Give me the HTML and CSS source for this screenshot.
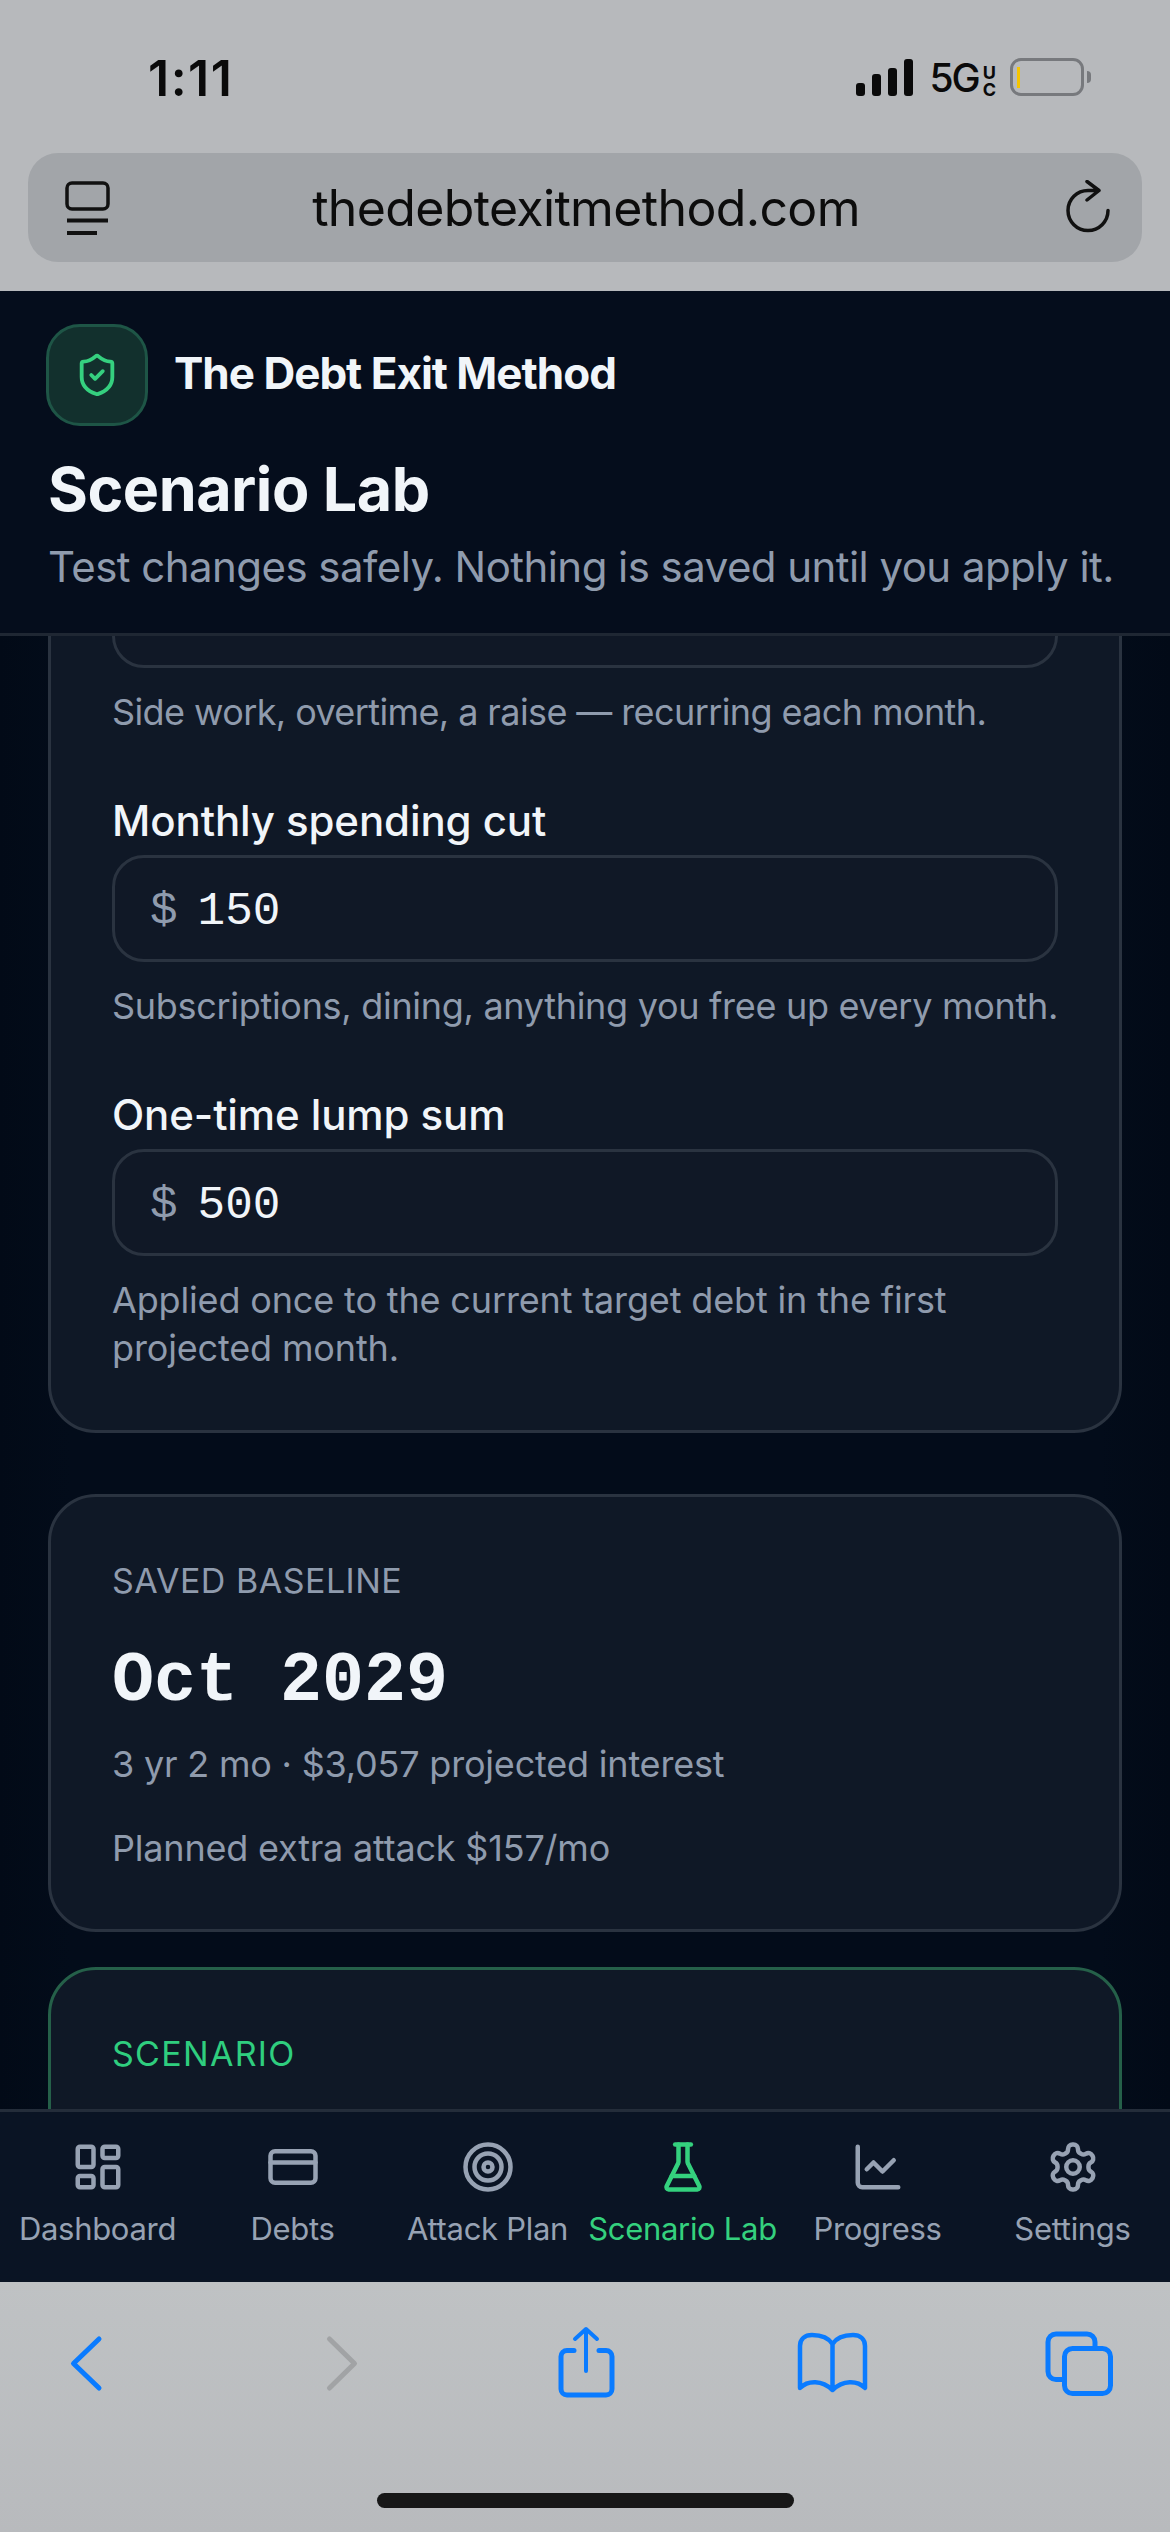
FILE: index.html
```html
<!DOCTYPE html>
<html lang="en">

<head>
    <meta charset="UTF-8">
    <meta name="viewport" content="width=device-width, initial-scale=1.0">
    <title>Scenario Lab</title>
    <link rel="stylesheet" href="styles.css">
</head>

<body>
    <div class="phone">

        <!-- Safari top -->
        <div class="browserTop">
            <div class="statusBar">
                <span class="time">1:11</span>
                <div class="statusRight">
                    <div class="signal"><i class="b1"></i><i class="b2"></i><i class="b3"></i><i class="b4"></i></div>
                    <span class="net">5G</span>
                    <span class="netSmall"><b>U</b><b>C</b></span>
                    <div class="battery"><i class="batteryLevel"></i></div>
                    <i class="batteryNub"></i>
                </div>
            </div>
            <div class="urlBar">
                <svg class="urlIcon" viewBox="0 0 46 56" fill="none" stroke="#111" stroke-width="3.5" stroke-linecap="round" stroke-linejoin="round">
                    <rect x="3" y="3" width="41" height="26" rx="5" />
                    <path d="M3 40.5H44M3 53H33" stroke-width="4" stroke-linecap="butt" />
                </svg>
                <span class="urlText">thedebtexitmethod.com</span>
                <svg class="urlIcon" viewBox="0 0 46 56" fill="none" stroke="#111" stroke-width="3.5" stroke-linecap="round" stroke-linejoin="round">
                    <path d="M33 10.5H22A20 20 0 1 0 42 30.5M21 1.5 33 10.5 21 20" />
                </svg>
            </div>
        </div>

        <!-- App header -->
        <header class="appHeader">
            <div class="brand">
                <div class="logo">
                    <svg class="logoIcon" viewBox="0 0 24 24" fill="none" stroke="#35d07f" stroke-width="2" stroke-linecap="round" stroke-linejoin="round">
                        <path d="M20 13c0 5-3.5 7.5-7.66 8.95a1 1 0 0 1-.67-.01C7.5 20.5 4 18 4 13V6a1 1 0 0 1 1-1c2 0 4.5-1.2 6.24-2.72a1.17 1.17 0 0 1 1.52 0C14.51 3.81 17 5 19 5a1 1 0 0 1 1 1z" />
                        <path d="m9 12 2 2 4-4" />
                    </svg>
                </div>
                <span class="brandName">The Debt Exit Method</span>
            </div>
            <h1>Scenario Lab</h1>
            <p class="subtitle">Test changes safely. Nothing is saved until you apply it.</p>
        </header>

        <!-- Scrolling content -->
        <main class="content">
            <div class="scrolled">
                <section class="card formCard">
                    <div class="inputBox"></div>
                    <p class="help helpTight">Side work, overtime, a raise — recurring each month.</p>

                    <div class="field">
                        <div class="fieldLabel">Monthly spending cut</div>
                        <div class="inputBox"><span class="dollar">$</span><span class="amount">150</span></div>
                        <p class="help">Subscriptions, dining, anything you free up every month.</p>
                    </div>

                    <div class="field">
                        <div class="fieldLabel">One-time lump sum</div>
                        <div class="inputBox"><span class="dollar">$</span><span class="amount">500</span></div>
                        <p class="help helpWide">Applied once to the current target debt in the first<br>projected month.</p>
                    </div>
                </section>

                <section class="card baseCard">
                    <div class="eyebrow">SAVED BASELINE</div>
                    <div class="bigDate">Oct 2029</div>
                    <p class="stat">3 yr 2 mo · $3,057 projected interest</p>
                    <p class="stat statLast">Planned extra attack $157/mo</p>
                </section>

                <section class="card scenarioCard">
                    <div class="eyebrow green">SCENARIO</div>
                </section>
            </div>
        </main>

        <!-- Tabs -->
        <nav class="tabBar">
            <div class="tab">
                <svg class="tabIcon" viewBox="0 0 24 24">
                    <rect x="3" y="3" width="7" height="9" rx="1" />
                    <rect x="14" y="3" width="7" height="5" rx="1" />
                    <rect x="14" y="12" width="7" height="9" rx="1" />
                    <rect x="3" y="16" width="7" height="5" rx="1" />
                </svg>
                <span>Dashboard</span>
            </div>
            <div class="tab">
                <svg class="tabIcon" viewBox="0 0 24 24">
                    <rect x="2" y="5" width="20" height="14" rx="2" />
                    <path d="M2 10h20" />
                </svg>
                <span>Debts</span>
            </div>
            <div class="tab">
                <svg class="tabIcon" viewBox="0 0 24 24">
                    <circle cx="12" cy="12" r="10" />
                    <circle cx="12" cy="12" r="6" />
                    <circle cx="12" cy="12" r="2" />
                </svg>
                <span>Attack Plan</span>
            </div>
            <div class="tab active">
                <svg class="tabIcon" viewBox="0 0 24 24">
                    <path d="M10 2v7.527a2 2 0 0 1-.211.896L4.72 20.55a1 1 0 0 0 .9 1.45h12.76a1 1 0 0 0 .9-1.45l-5.069-10.127A2 2 0 0 1 14 9.527V2" />
                    <path d="M8.5 2h7" />
                    <path d="M7 16h10" />
                </svg>
                <span>Scenario Lab</span>
            </div>
            <div class="tab">
                <svg class="tabIcon" viewBox="0 0 24 24">
                    <path d="M3 3v16a2 2 0 0 0 2 2h16" />
                    <path d="m7 13 3-3 4 4 5-5" />
                </svg>
                <span>Progress</span>
            </div>
            <div class="tab">
                <svg class="tabIcon" viewBox="0 0 24 24">
                    <path d="M12.22 2h-.44a2 2 0 0 0-2 2v.18a2 2 0 0 1-1 1.73l-.43.25a2 2 0 0 1-2 0l-.15-.08a2 2 0 0 0-2.73.73l-.22.38a2 2 0 0 0 .73 2.73l.15.1a2 2 0 0 1 1 1.72v.51a2 2 0 0 1-1 1.74l-.15.09a2 2 0 0 0-.73 2.73l.22.38a2 2 0 0 0 2.73.73l.15-.08a2 2 0 0 1 2 0l.43.25a2 2 0 0 1 1 1.73V20a2 2 0 0 0 2 2h.44a2 2 0 0 0 2-2v-.18a2 2 0 0 1 1-1.73l.43-.25a2 2 0 0 1 2 0l.15.08a2 2 0 0 0 2.73-.73l.22-.39a2 2 0 0 0-.73-2.73l-.15-.08a2 2 0 0 1-1-1.74v-.5a2 2 0 0 1 1-1.74l.15-.09a2 2 0 0 0 .73-2.73l-.22-.38a2 2 0 0 0-2.73-.73l-.15.08a2 2 0 0 1-2 0l-.43-.25a2 2 0 0 1-1-1.73V4a2 2 0 0 0-2-2z" />
                    <circle cx="12" cy="12" r="3" />
                </svg>
                <span>Settings</span>
            </div>
        </nav>

        <!-- Safari bottom -->
        <div class="browserBottom">
            <div class="toolbar">
                <svg class="toolIcon" viewBox="0 0 80 80" stroke="#0a7bff" stroke-width="5">
                    <path d="M53 17 27.5 41.5 53 66" />
                </svg>
                <svg class="toolIcon" viewBox="0 0 80 80" stroke="#a1a3a5" stroke-width="5">
                    <path d="M34.5 17 59.5 41.5 34.5 66" />
                </svg>
                <svg class="toolIcon" viewBox="0 0 80 80" stroke="#0a7bff" stroke-width="5">
                    <path d="M31 28.5H24a6 6 0 0 0-6 6V67a6 6 0 0 0 6 6H63a6 6 0 0 0 6-6V34.5a6 6 0 0 0-6-6H56" />
                    <path d="M43 8V49M32 17 43 7 54 17" stroke-width="4" />
                </svg>
                <svg class="toolIcon" viewBox="0 0 80 80" stroke="#0a7bff" stroke-width="4.5">
                    <path d="M40.5 22C36 15 28 13 20 13 13 13 8 17 8 24V66C16 58 30 58 40.5 68 51 58 65 58 73 66V24C73 17 68 13 61 13 53 13 45 15 40.5 22V68" />
                </svg>
                <svg class="toolIcon" viewBox="0 0 80 80" stroke="#0a7bff" stroke-width="5">
                    <rect x="24.5" y="26.5" width="46" height="45" rx="8" />
                    <path d="M22 57.5H16a8 8 0 0 1-8-8V20a8 8 0 0 1 8-8H47a8 8 0 0 1 8 8V25" />
                </svg>
            </div>
            <div class="homeBar"></div>
        </div>
    </div>
</body>

</html>
```

FILE: styles.css
```css
* {
    box-sizing: border-box;
}

html,
body {
    margin: 0;
    padding: 0;
}

body {
    font-family: Inter, "Noto Sans", sans-serif;
    background-color: #020a17;
}

p,
h1 {
    margin: 0;
}

.phone {
    width: 1170px;
    height: 2532px;
    display: flex;
    flex-direction: column;
    overflow: hidden;
}

/* browser top */
.browserTop {
    height: 291px;
    flex-shrink: 0;
    background-color: #b7b9bc;
    padding: 0 28px;
}

.statusBar {
    height: 153px;
    display: flex;
    justify-content: space-between;
    padding: 50px 0 0 120px;
    color: #0a0a0a;
}

.time {
    font-size: 50px;
    font-weight: 600;
    line-height: 56px;
    letter-spacing: 1.5px;
}

.statusRight {
    display: flex;
    align-items: flex-start;
    padding: 8px 51px 0 0;
}

.signal {
    display: flex;
    align-items: flex-end;
    gap: 7px;
    height: 37px;
    margin-top: 1px;
}

.signal i {
    display: block;
    width: 9px;
    border-radius: 3px;
    background-color: #0a0a0a;
}

.b1 {
    height: 13px;
}

.b2 {
    height: 22px;
}

.b3 {
    height: 28px;
}

.b4 {
    height: 37px;
}

.net {
    font-size: 39px;
    font-weight: 500;
    line-height: 40px;
    margin-left: 16px;
    letter-spacing: -2px;
}

.netSmall {
    display: flex;
    flex-direction: column;
    margin: 6px 0 0 4px;
    font-size: 18px;
    line-height: 17px;
    font-weight: 700;
}

.netSmall b {
    font-weight: 700;
}

.battery {
    width: 74px;
    height: 38px;
    border: 3px solid #77797d;
    border-radius: 11px;
    margin: 0 0 0 14px;
    padding: 6px 4px;
}

.batteryLevel {
    display: block;
    width: 3px;
    height: 21px;
    background-color: #f5c400;
}

.batteryNub {
    display: block;
    width: 4px;
    height: 12px;
    margin: 13px 0 0 3px;
    border-radius: 0 6px 6px 0;
    background-color: #77797d;
}

.urlBar {
    height: 109px;
    display: flex;
    align-items: center;
    justify-content: space-between;
    padding: 0 30px 0 36px;
    border-radius: 30px;
    background-color: #a2a5a9;
    color: #0c0c0c;
}

.urlIcon {
    width: 46px;
    height: 56px;
}

.urlText {
    font-size: 50px;
    font-weight: 400;
    letter-spacing: -0.65px;
    margin-right: 4px;
}

/* app header */
.appHeader {
    height: 345px;
    flex-shrink: 0;
    padding: 33px 48px 0 48px;
    background-color: #050d1c;
    border-bottom: 3px solid #1f2733;
}

.brand {
    display: flex;
    align-items: center;
    gap: 26px;
    margin-left: -2px;
}

.logo {
    width: 102px;
    height: 102px;
    display: flex;
    align-items: center;
    justify-content: center;
    border: 3px solid #1e5546;
    border-radius: 34px;
    background-color: #12302d;
}

.logoIcon {
    width: 46px;
    height: 46px;
}

.brandName {
    font-size: 44px;
    line-height: 50px;
    font-weight: 700;
    color: #f1f5f9;
    letter-spacing: -1px;
    margin-top: -4px;
}

h1 {
    font-size: 61px;
    line-height: 72px;
    font-weight: 700;
    color: #f1f5f9;
    margin-top: 27px;
    letter-spacing: -0.5px;
}

.subtitle {
    font-size: 42px;
    line-height: 56px;
    margin-top: 14px;
    color: #8f9bad;
    letter-spacing: -0.55px;
    white-space: nowrap;
}

/* scrolling content */
.content {
    flex: 1;
    min-height: 0;
    overflow: hidden;
    padding: 0 48px;
    background: linear-gradient(90deg, #020a17, #030c1a 6%, #030c1a 94%, #020a17);
}

.scrolled {
    margin-top: -120px;
}

.card {
    border: 3px solid #2a3340;
    border-radius: 48px;
    background-color: #0f1826;
    padding: 0 61px;
}

.formCard {
    padding-top: 42px;
    padding-bottom: 58px;
}

.baseCard {
    margin-top: 61px;
    height: 438px;
    padding-top: 61px;
}

.scenarioCard {
    margin-top: 35px;
    height: 400px;
    border-color: #256049;
    padding-top: 61px;
}

.inputBox {
    height: 107px;
    display: flex;
    align-items: center;
    gap: 20px;
    padding: 6px 35px 0 35px;
    border: 3px solid #2a3340;
    border-radius: 32px;
    background-color: #101826;
}

.help {
    font-size: 36px;
    line-height: 48px;
    margin-top: 20px;
    color: #8f9bad;
    letter-spacing: -0.3px;
}

.helpTight {
    letter-spacing: -0.6px;
}

.helpWide {
    letter-spacing: -0.15px;
}

.field {
    margin-top: 58px;
}

.fieldLabel {
    font-size: 42px;
    line-height: 54px;
    font-weight: 500;
    color: #f1f5f9;
    margin-bottom: 7px;
    letter-spacing: -0.1px;
}

.dollar {
    font-family: "Liberation Mono", monospace;
    font-size: 46px;
    color: #8f9bad;
}

.amount {
    font-family: "Liberation Mono", monospace;
    font-size: 46px;
    color: #f1f5f9;
}

.eyebrow {
    font-size: 34px;
    line-height: 46px;
    color: #8f9bad;
    letter-spacing: 0.5px;
}

.green {
    color: #2fce7f;
    letter-spacing: 1.3px;
}

.bigDate {
    font-family: "Liberation Mono", monospace;
    font-size: 70px;
    line-height: 84px;
    font-weight: 700;
    color: #f1f5f9;
    margin-top: 36px;
}

.stat {
    font-size: 36px;
    line-height: 48px;
    margin-top: 16px;
    color: #8f9bad;
    letter-spacing: -0.2px;
}

.statLast {
    margin-top: 36px;
}

/* tabs */
.tabBar {
    height: 173px;
    flex-shrink: 0;
    display: grid;
    grid-template-columns: repeat(6, 1fr);
    padding-top: 28px;
    background-color: #0a1424;
    border-top: 3px solid #242d3a;
}

.tab {
    display: flex;
    flex-direction: column;
    align-items: center;
    color: #97a2b3;
    font-size: 31px;
    line-height: 40px;
    letter-spacing: -0.3px;
    white-space: nowrap;
}

.tab span {
    margin-top: 15px;
}

.tabIcon {
    width: 54px;
    height: 54px;
    fill: none;
    stroke: currentColor;
    stroke-width: 2;
    stroke-linecap: round;
    stroke-linejoin: round;
}

.active {
    color: #34d17e;
}

/* browser bottom */
.browserBottom {
    height: 250px;
    flex-shrink: 0;
    padding-top: 40px;
    background: linear-gradient(180deg, #bfc2c4, #b8babd);
}

.toolbar {
    display: flex;
    justify-content: space-between;
    padding: 0 50px 0 46px;
}

.toolIcon {
    width: 80px;
    height: 80px;
    fill: none;
    stroke-linecap: round;
    stroke-linejoin: round;
}

.homeBar {
    width: 417px;
    height: 15px;
    margin: 91px auto 0 auto;
    border-radius: 8px;
    background-color: #171717;
}
```
